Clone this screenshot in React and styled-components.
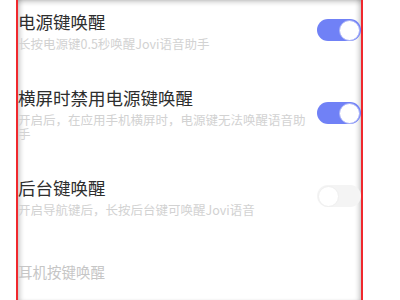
import styled, { createGlobalStyle } from 'styled-components';

const GlobalStyle = createGlobalStyle`
  html, body {
    margin: 0;
    padding: 0;
    background: #fff;
  }
  body {
    font-family: "Noto Sans CJK SC", "Noto Sans", sans-serif;
  }
`;

const items = [
  {title: '电源键唤醒', desc: '长按电源键0.5秒唤醒Jovi语音助手', on: true},
  {title: '横屏时禁用电源键唤醒', desc: '开启后，在应用手机横屏时，电源键无法唤醒语音助手', on: true},
  {title: '后台键唤醒', desc: '开启导航键后，长按后台键可唤醒Jovi语音', on: false},
];

const App = () => {
  return (
    <>
      <GlobalStyle/>
      <Page>
        <Panel>
          <List>
            {
              items.map((item, index) => (
                <Row key={index}>
                  <Text>
                    <Title>{item.title}</Title>
                    <Desc>{item.desc}</Desc>
                  </Text>
                  <Toggle $on={item.on}>
                    <Knob $on={item.on}/>
                  </Toggle>
                </Row>
              ))
            }
            <Disabled>耳机按键唤醒</Disabled>
          </List>
        </Panel>
      </Page>
    </>
  )
}

const Page = styled.div`
  width: 400px;
  height: 300px;
  overflow: hidden;
  padding-left: 16px;
  box-sizing: border-box;
`;

const Panel = styled.div`
  width: 347px;
  height: 300px;
  box-sizing: border-box;
  border-left: 2px solid #f0282d;
  border-right: 2px solid #f0282d;
  overflow: hidden;
  box-shadow: inset 0 5px 5px -3px rgba(0, 0, 0, 0.22),
    inset 5px 0 5px -3px rgba(0, 0, 0, 0.22),
    inset -5px 0 5px -3px rgba(0, 0, 0, 0.22);
`;

const List = styled.div`
  display: flex;
  flex-direction: column;
  gap: 36px;
  padding-top: 11px;
`;

const Row = styled.div`
  display: flex;
  align-items: center;
`;

const Text = styled.div`
  width: 292px;
  display: flex;
  flex-direction: column;
  gap: 4px;
`;

const Title = styled.div`
  font-size: 17.5px;
  line-height: 22px;
  color: #2e2e2e;
`;

const Desc = styled.div`
  font-size: 12.5px;
  line-height: 14px;
  color: #d2d2d2;
`;

const Toggle = styled.div`
  margin-left: auto;
  margin-top: -2px;
  width: 44px;
  height: 22px;
  border-radius: 11px;
  background: ${props => props.$on ? '#7081f6' : '#f4f4f4'};
  display: flex;
  align-items: center;
  justify-content: ${props => props.$on ? 'flex-end' : 'flex-start'};
  padding: 0 1px;
  box-sizing: border-box;
`;

const Knob = styled.div`
  width: 21px;
  height: 21px;
  border-radius: 50%;
  background: #fff;
  box-sizing: border-box;
  border: 1px solid ${props => props.$on ? '#a9b2f7' : '#efefef'};
`;

const Disabled = styled.div`
  margin-top: 8px;
  font-size: 14.5px;
  line-height: 22px;
  color: #c6c6c6;
`;

export default App;
